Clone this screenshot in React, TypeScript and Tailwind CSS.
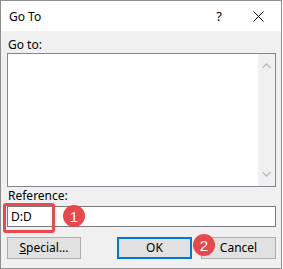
import React from "react";

export default function App() {
  const font = { fontFamily: '"Segoe UI", "Noto Sans", "Open Sans", sans-serif' };
  return (
    <div className="w-[283px] h-[269px] bg-white" style={font}>
      <div className="relative w-[282px] h-[269px] border border-[#8e8e8e] flex flex-col text-[12px] text-black">
        {/* Title bar */}
        <div className="h-[30px] bg-white flex items-center pl-[8px] shrink-0">
          <span className="text-[12px] leading-none mt-[1px]">Go To</span>
          <span className="ml-auto text-[13px] leading-none mr-[31px] mt-[1px]">?</span>
          <svg width="11" height="11" viewBox="0 0 11 11" className="mr-[17px]">
            <path d="M0.5 0.5 L10.5 10.5 M10.5 0.5 L0.5 10.5" stroke="#000" strokeWidth="1" />
          </svg>
        </div>
        {/* Body */}
        <div className="flex-1 bg-[#f0f0f0] pl-[6px] pr-[5px] pt-[6px] flex flex-col">
          <div className="h-[16px] leading-[16px] pl-[1px]">Go to:</div>
          <div className="h-[134px] border border-[#828790] bg-white flex">
            <div className="flex-1" />
            <div className="w-[17px] bg-[#f0f0f0] flex flex-col items-center justify-between py-[9px]">
              <svg width="9" height="6" viewBox="0 0 9 6">
                <path d="M0.5 5 L4.5 1 L8.5 5" stroke="#c2c2c2" strokeWidth="1.6" fill="none" />
              </svg>
              <svg width="9" height="6" viewBox="0 0 9 6">
                <path d="M0.5 1 L4.5 5 L8.5 1" stroke="#c2c2c2" strokeWidth="1.6" fill="none" />
              </svg>
            </div>
          </div>
          <div className="h-[16px] leading-[16px] pl-[1px] mt-[1px]">Reference:</div>
          <div className="h-[21px] mt-[2px] border border-[#7a7a7a] bg-white flex items-center pl-[3px]">
            <span className="leading-none">D:D</span>
          </div>
          <div className="flex mt-[10px]">
            <div className="w-[74px] h-[22px] border border-[#adadad] bg-[#e1e1e1] flex items-center justify-center">
              <span><span className="underline">S</span>pecial...</span>
            </div>
            <div className="w-[75px] h-[22px] ml-[36px] border-2 border-[#0078d7] bg-[#e1e1e1] flex items-center justify-center">
              OK
            </div>
            <div className="w-[75px] h-[22px] ml-[9px] border border-[#adadad] bg-[#e1e1e1] flex items-center justify-center">
              Cancel
            </div>
          </div>
        </div>
        {/* Annotations */}
        <div className="absolute left-[2px] top-[202px] w-[52px] h-[30px] border-[3px] border-[#e84a4f] rounded-[3px]" />
        <div className="absolute left-[62px] top-[204px] w-[22px] h-[22px] rounded-full bg-[#e8474c] text-white flex items-center justify-center text-[15px] leading-none" style={{ fontFamily: '"Liberation Sans", Arial, sans-serif' }}>
          1
        </div>
        <div className="absolute left-[192px] top-[233px] w-[22px] h-[22px] rounded-full bg-[#e8474c] text-white flex items-center justify-center text-[15px] leading-none" style={{ fontFamily: '"Liberation Sans", Arial, sans-serif' }}>
          2
        </div>
      </div>
    </div>
  );
}
